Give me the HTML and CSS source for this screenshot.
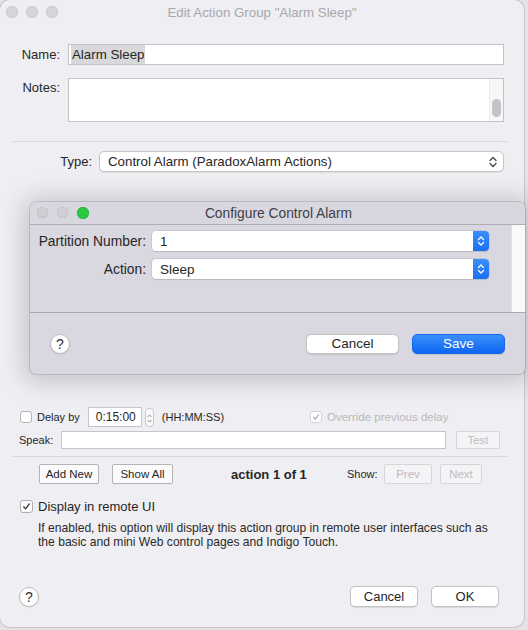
FILE: index.html
```html
<!DOCTYPE html>
<html>
<head>
<meta charset="utf-8">
<link rel="stylesheet" href="styles.css">
</head>
<body>
<div class="desk">
  <div class="window">
    <div class="titlebar">
      <div class="lights"><span></span><span></span><span></span></div>
      <div class="title">Edit Action Group "Alarm Sleep"</div>
    </div>

    <div class="row name-row">
      <div class="lbl">Name:</div>
      <div class="field name-field"><span class="sel">Alarm Sleep</span></div>
    </div>

    <div class="row notes-row">
      <div class="lbl notes-lbl">Notes:</div>
      <div class="field notes"><div class="track"><div class="thumb"></div></div></div>
    </div>

    <div class="sep"></div>

    <div class="type-row">
      <div class="type-lbl">Type:</div>
      <div class="popup">
        <span>Control Alarm (ParadoxAlarm Actions)</span>
        <svg class="chev" width="8" height="12" viewBox="0 0 8 12"><path d="M1 4.5 L4 1.5 L7 4.5 M1 7.5 L4 10.5 L7 7.5" fill="none" stroke="#444" stroke-width="1.3" stroke-linecap="round" stroke-linejoin="round"/></svg>
      </div>
    </div>

    <div class="delay-row">
      <div class="delay-left">
        <span class="cb"></span>
        <span class="small delay-txt">Delay by</span>
        <div class="time">0:15:00</div>
        <div class="stepper"><svg width="8" height="19" viewBox="0 0 8 19"><path d="M2 7.5 L4 5.5 L6 7.5 M2 11.5 L4 13.5 L6 11.5" fill="none" stroke="#777" stroke-width="1" stroke-linecap="round"/></svg></div>
        <span class="small hms">(HH:MM:SS)</span>
      </div>
      <div class="delay-right">
        <span class="cb cb-dis"><svg width="12" height="12" viewBox="0 0 12 12"><path d="M3 6.3 L5.2 8.6 L9.2 3.4" fill="none" stroke="#aaa" stroke-width="1.4" stroke-linecap="round" stroke-linejoin="round"/></svg></span>
        <span class="small dis override-txt">Override previous delay</span>
      </div>
    </div>

    <div class="speak-row">
      <span class="small speak-lbl">Speak:</span>
      <div class="speak-field"></div>
      <div class="btn-sq test dis">Test</div>
    </div>

    <div class="sep sep2"></div>

    <div class="nav-row">
      <div class="btn-sq addnew">Add New</div>
      <div class="btn-sq showall">Show All</div>
      <div class="count">action 1 of 1</div>
      <span class="small show-lbl">Show:</span>
      <div class="btn-sq prev dis">Prev</div>
      <div class="btn-sq next dis">Next</div>
    </div>

    <div class="remote-row">
      <span class="cb cb-on"><svg width="13" height="13" viewBox="0 0 13 13"><path d="M3.2 6.8 L5.5 9.3 L9.8 3.4" fill="none" stroke="#333" stroke-width="1.5" stroke-linecap="round" stroke-linejoin="round"/></svg></span>
      <span class="remote-txt">Display in remote UI</span>
    </div>
    <div class="desc">If enabled, this option will display this action group in remote user interfaces such as<br>the basic and mini Web control pages and Indigo Touch.</div>

    <div class="footer">
      <div class="help">?</div>
      <div class="footer-btns">
        <div class="btn">Cancel</div>
        <div class="btn">OK</div>
      </div>
    </div>
  </div>

  <div class="sheet">
    <div class="sheet-title">
      <div class="lights slights"><span></span><span></span><span class="green"></span></div>
      <div class="stitle">Configure Control Alarm</div>
    </div>
    <div class="sheet-body">
      <div class="sheet-form">
        <div class="srow">
          <div class="slbl">Partition Number:</div>
          <div class="spopup"><span>1</span><div class="blue"><svg width="8" height="12" viewBox="0 0 8 12"><path d="M1.5 4.5 L4 2 L6.5 4.5 M1.5 7.5 L4 10 L6.5 7.5" fill="none" stroke="#fff" stroke-width="1.3" stroke-linecap="round" stroke-linejoin="round"/></svg></div></div>
        </div>
        <div class="srow srow2">
          <div class="slbl">Action:</div>
          <div class="spopup"><span>Sleep</span><div class="blue"><svg width="8" height="12" viewBox="0 0 8 12"><path d="M1.5 4.5 L4 2 L6.5 4.5 M1.5 7.5 L4 10 L6.5 7.5" fill="none" stroke="#fff" stroke-width="1.3" stroke-linecap="round" stroke-linejoin="round"/></svg></div></div>
        </div>
      </div>
      <div class="strip"></div>
    </div>
    <div class="sheet-footer">
      <div class="help shelp">?</div>
      <div class="sbtns">
        <div class="btn sbtn">Cancel</div>
        <div class="btn sbtn save">Save</div>
      </div>
    </div>
  </div>
</div>
</body>
</html>
```

FILE: styles.css
```css
* { box-sizing: border-box; }
html, body { margin: 0; padding: 0; }
body {
  background: #e4e4e6;
  font-family: "Liberation Sans", Arial, sans-serif;
  font-size: 13px;
  color: #262626;
  width: 528px;
  height: 630px;
  overflow: hidden;
}
.desk { position: relative; width: 528px; height: 630px; }

.window {
  width: 524px;
  height: 627px;
  background: #efeef2;
  border-radius: 10px;
  box-shadow: 0 0 0 1px #c8c7cc;
  overflow: hidden;
}

.titlebar {
  height: 24px;
  display: grid;
  grid-template-columns: 1fr;
  align-items: center;
}
.titlebar > * { grid-area: 1 / 1; }
.lights { display: flex; gap: 8px; padding-left: 6px; }
.lights span {
  width: 12px; height: 12px; border-radius: 50%;
  background: #d5d4d8;
  box-shadow: inset 0 0 0 0.5px #c4c3c8;
}
.title { justify-self: center; color: #a8a8ac; padding-top: 1px; font-size: 13.3px; }

.row { display: flex; padding-left: 12px; }
.lbl { width: 48px; text-align: right; margin-right: 8px; }
.field { background: #fff; border: 1px solid #c3c3c6; }
.name-row { margin-top: 20px; align-items: center; }
.name-field { width: 436px; height: 21px; display: flex; align-items: center; padding-left: 2px; font-size: 13.3px; }
.sel { background: #d8d8da; padding: 1px 1px; line-height: 17px; }
.notes-row { margin-top: 13px; align-items: flex-start; }
.notes-lbl { padding-top: 2px; line-height: 16px; }
.notes { width: 436px; height: 44px; display: flex; justify-content: flex-end; }
.track { width: 14px; height: 100%; background: #f7f7f8; border-left: 1px solid #ececee; padding: 20px 2px 3px 2px; }
.thumb { width: 9px; height: 18px; background: #c4c4c6; border-radius: 5px; }

.sep { height: 1px; background: #d9d8de; margin: 19px 16px 0 12px; }

.type-row { display: flex; align-items: center; margin-top: 9px; }
.type-lbl { width: 92px; text-align: right; margin-right: 7px; }
.popup {
  width: 405px; height: 21px; background: #fff;
  border: 1px solid #c6c6c9; border-radius: 5px;
  box-shadow: 0 0.5px 1px rgba(0,0,0,0.08);
  display: flex; align-items: center; justify-content: space-between;
  padding: 0 6px 0 8px;
  font-size: 13.3px;
}
.chev { display: block; }

.small { font-size: 11px; }
.dis { color: #b9b9bc; }

.delay-row {
  margin-top: 235px;
  height: 20px;
  display: grid;
  grid-template-columns: 290px 1fr;
  padding-left: 20px;
  align-items: center;
}
.delay-left, .delay-right { display: flex; align-items: center; }
.cb {
  width: 12px; height: 12px; border-radius: 3px;
  background: #fff; border: 1px solid #b3b3b6;
  display: flex; align-items: center; justify-content: center;
  flex: none;
}
.cb svg { display: block; }
.cb-dis { border-color: #d4d4d6; }
.delay-txt { margin-left: 5px; }
.time {
  margin-left: 8px; width: 54px; height: 20px; background: #fff;
  border: 1px solid #c6c6c9; font-size: 12px;
  display: flex; align-items: center; justify-content: flex-end; padding-right: 5px;
}
.stepper {
  margin-left: 3px; width: 9px; height: 19px; border: 1px solid #c9c9cc;
  border-radius: 4px; background: #fbfbfb; display: flex; justify-content: center;
}
.stepper svg { display: block; }
.hms { margin-left: 8px; }
.override-txt { margin-left: 5px; font-size: 11.5px; }

.speak-row { display: flex; align-items: center; margin-top: 4px; padding-left: 19px; height: 18px; }
.speak-lbl { width: 42px; }
.speak-field { width: 385px; height: 18px; background: #fff; border: 1px solid #c6c6c9; }
.btn-sq {
  height: 20px; border: 1px solid #b4b4b7; border-radius: 2px;
  background: #fbfbfb; font-size: 11.5px;
  display: flex; align-items: center; justify-content: center;
  box-shadow: 0 0.5px 0.5px rgba(0,0,0,0.06);
}
.btn-sq.dis { border-color: #d5d5d8; color: #bcbcbf; background: #f4f4f6; box-shadow: none; }
.test { width: 44px; height: 18px; margin-left: 10px; }

.sep2 { margin-top: 7px; }

.nav-row { display: flex; align-items: center; margin-top: 7px; padding-left: 39px; height: 20px; }
.addnew { width: 60px; }
.showall { width: 61px; margin-left: 13px; }
.count { font-weight: bold; margin-left: 58px; width: 116px; }
.show-lbl { width: 37px; }
.prev { width: 48px; }
.next { width: 42px; margin-left: 8px; }

.remote-row { display: flex; align-items: center; margin-top: 16px; padding-left: 20px; height: 13px; }
.cb-on { width: 13px; height: 13px; border-color: #aeaeb1; }
.remote-txt { margin-left: 5px; }
.desc { font-size: 12.1px; line-height: 14px; padding-left: 38px; margin-top: 8px; color: #2a2a2a; }

.footer { display: flex; align-items: center; justify-content: space-between; margin-top: 37px; padding: 0 25px 0 19px; height: 21px; }
.help {
  width: 20px; height: 20px; border-radius: 50%; background: #fff;
  border: 1px solid #bdbdc0; box-shadow: 0 0.5px 1px rgba(0,0,0,0.12);
  display: flex; align-items: center; justify-content: center;
  font-size: 14px; color: #333;
}
.footer-btns { display: flex; gap: 13px; }
.btn {
  width: 68px; height: 21px; background: #fff; border: 1px solid #c3c3c6;
  border-radius: 5px; box-shadow: 0 0.5px 1px rgba(0,0,0,0.1);
  display: flex; align-items: center; justify-content: center;
}

/* sheet window floating over main window */
.sheet {
  position: absolute; left: 30px; top: 202px;
  width: 495px; height: 172px;
  background: #d9d7e0;
  border-radius: 6px;
  box-shadow: 0 0 0 1px rgba(0,0,0,0.12), 0 2px 24px 6px rgba(0,0,0,0.18);
  overflow: hidden;
  display: flex; flex-direction: column;
  font-size: 13.8px;
}
.sheet-title {
  height: 23px; flex: none;
  display: grid; grid-template-columns: 1fr; align-items: center;
  background: #d8d6df;
  border-bottom: 1px solid #aeacb6;
}
.sheet-title > * { grid-area: 1 / 1; }
.slights { padding-left: 7px; gap: 9px; }
.slights span { width: 11px; height: 11px; background: #cfced3; box-shadow: inset 0 0 0 0.5px #bdbcc2; }
.slights span.green { background: #2ac840; box-shadow: inset 0 0 0 0.5px #22a834; width: 12px; height: 12px; }
.stitle { justify-self: center; color: #3f3f44; padding-top: 1px; padding-left: 2px; }

.sheet-body { height: 88px; display: flex; border-bottom: 1px solid #a9a7b1; flex: none; }
.sheet-form { flex: 1; padding-top: 6px; }
.strip { width: 14px; background: #f9f9fa; border-left: 1px solid #e2e1e6; }
.srow { display: flex; align-items: center; padding-left: 8px; height: 20px; }
.srow2 { margin-top: 8px; }
.slbl { width: 108px; text-align: right; margin-right: 6px; }
.spopup {
  width: 337px; height: 20px; background: #fff; border-radius: 4px;
  box-shadow: 0 0 0 0.5px #b9b8bf, 0 0.5px 1px rgba(0,0,0,0.15);
  display: flex; align-items: center; justify-content: space-between; padding-left: 8px;
  overflow: hidden;
  font-size: 13.5px;
}
.blue {
  width: 16px; height: 20px;
  background: linear-gradient(#3a8ff8, #1b6ff2);
  display: flex; align-items: center; justify-content: center;
}
.blue svg { display: block; }

.sheet-footer { flex: 1; display: flex; align-items: center; justify-content: space-between; padding: 0 20px 0 20px; }
.sbtns { display: flex; gap: 13px; }
.sbtn { width: 93px; height: 20px; font-size: 13.5px; }
.save {
  background: linear-gradient(#3a8ff9, #0d67f2);
  border-color: #1268ee; color: #fff;
}
```
